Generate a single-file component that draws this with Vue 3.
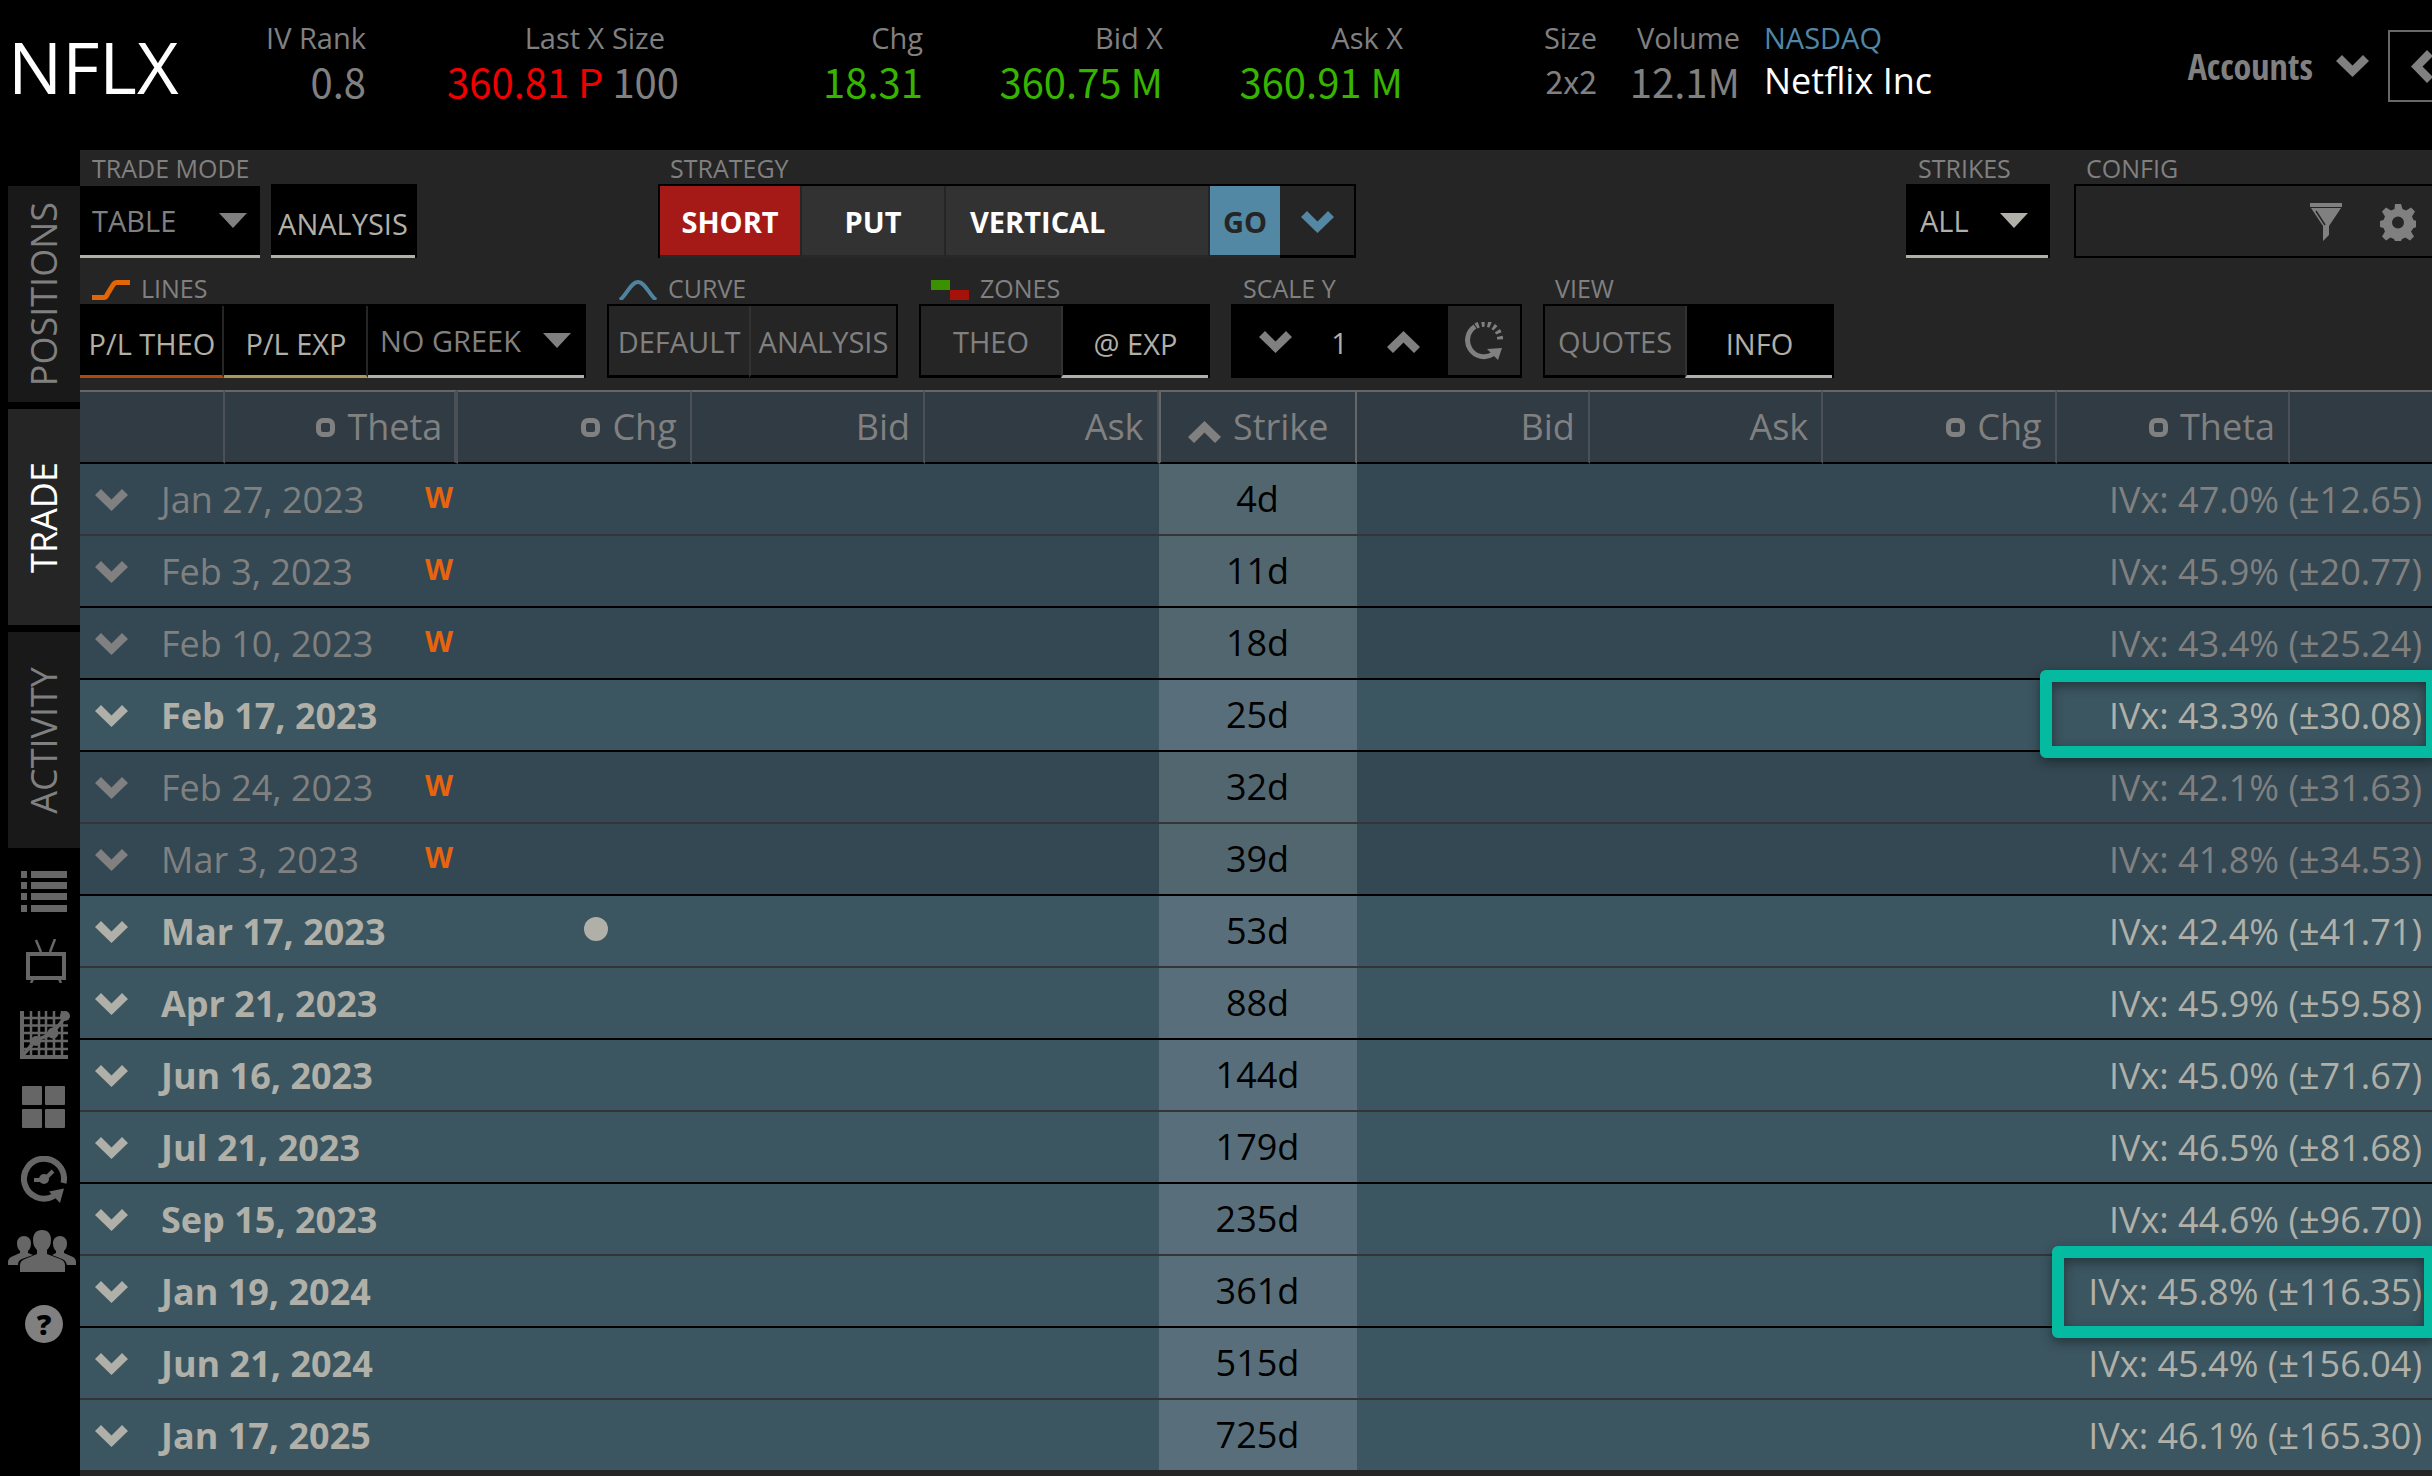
<script setup>
import { ref } from 'vue'

const tabs = ['POSITIONS', 'TRADE', 'ACTIVITY']
const activeTab = ref('TRADE')

const quotes = [
  { key: 'iv', label: 'IV Rank', value: '0.8' },
  { key: 'last', label: 'Last X Size', value: '360.81 P', tone: 'down', extra: '100' },
  { key: 'chg', label: 'Chg', value: '18.31', tone: 'up' },
  { key: 'bid', label: 'Bid X', value: '360.75 M', tone: 'up' },
  { key: 'ask', label: 'Ask X', value: '360.91 M', tone: 'up' },
  { key: 'size', label: 'Size', value: '2x2' },
  { key: 'volume', label: 'Volume', value: '12.1M' }
]

const rows = [
  { date: 'Jan 27, 2023', days: '4d', iv: '47.0%', move: '12.65', weekly: true, line: 'soft' },
  { date: 'Feb 3, 2023', days: '11d', iv: '45.9%', move: '20.77', weekly: true },
  { date: 'Feb 10, 2023', days: '18d', iv: '43.4%', move: '25.24', weekly: true },
  { date: 'Feb 17, 2023', days: '25d', iv: '43.3%', move: '30.08', mark: 'narrow' },
  { date: 'Feb 24, 2023', days: '32d', iv: '42.1%', move: '31.63', weekly: true, line: 'soft' },
  { date: 'Mar 3, 2023', days: '39d', iv: '41.8%', move: '34.53', weekly: true },
  { date: 'Mar 17, 2023', days: '53d', iv: '42.4%', move: '41.71', dot: true, line: 'soft' },
  { date: 'Apr 21, 2023', days: '88d', iv: '45.9%', move: '59.58' },
  { date: 'Jun 16, 2023', days: '144d', iv: '45.0%', move: '71.67', line: 'soft' },
  { date: 'Jul 21, 2023', days: '179d', iv: '46.5%', move: '81.68' },
  { date: 'Sep 15, 2023', days: '235d', iv: '44.6%', move: '96.70', line: 'soft' },
  { date: 'Jan 19, 2024', days: '361d', iv: '45.8%', move: '116.35', mark: 'wide' },
  { date: 'Jun 21, 2024', days: '515d', iv: '45.4%', move: '156.04', line: 'soft' },
  { date: 'Jan 17, 2025', days: '725d', iv: '46.1%', move: '165.30', line: 'last' }
]
</script>

<template>
  <div class="app">
    <header class="topbar">
      <h1 class="symbol">NFLX</h1>
      <div v-for="q in quotes" :key="q.key" class="quote" :class="q.key">
        <span class="q-label">{{ q.label }}</span>
        <span class="q-value"><span :class="q.tone">{{ q.value }}</span><template v-if="q.extra">{{ ' ' + q.extra }}</template></span>
      </div>
      <div class="company">
        <span class="exchange">NASDAQ</span>
        <span class="name">Netflix Inc</span>
      </div>
      <button class="accounts" type="button">
        Accounts
        <svg class="chev" viewBox="0 0 33 22"><path d="M6 0 0 6 16.5 22 33 6 27 0 16.5 10.5z" /></svg>
      </button>
      <button class="collapse" type="button" aria-label="Collapse">
        <svg width="22" height="33" viewBox="0 0 22 33"><path d="M22 6 16 0 0 16.5 16 33 22 27 11.5 16.5z" /></svg>
      </button>
    </header>

    <div class="body">
      <nav class="side">
        <button v-for="t in tabs" :key="t" type="button" class="tab" :class="{ on: t === activeTab }" @click="activeTab = t">
          <span>{{ t }}</span>
        </button>
        <div class="tools">
          <button type="button" aria-label="Watchlist">
            <svg width="46" height="41" viewBox="0 0 46 41"><path d="M0 0h6v7H0zM10 0h36v7H10zM0 11h6v7H0zM10 11h36v7H10zM0 22h6v7H0zM10 22h36v7H10zM0 34h6v7H0zM10 34h36v7H10z" /></svg>
          </button>
          <button type="button" aria-label="Live" class="tv">
            <svg width="40" height="44" viewBox="0 0 40 44"><path d="M0 13h40v28H0zM4 17v20h32V17z" fill-rule="evenodd" /><path d="M10 1l5 12M29 0l-5 13M7 40l-2 4M33 40l2 4" stroke="#666" stroke-width="2.500" fill="none" /></svg>
          </button>
          <button type="button" aria-label="Charts" class="chart">
            <svg width="50" height="48" viewBox="0 0 50 48"><path d="M2 0v48M0 46h48" stroke="#666" stroke-width="4" /><path d="M11 0v46M19 0v46M26 0v46M34 0v46M42 0v46M2 7h46M2 14.500h46M2 22h46M2 30h46M2 38h46" stroke="#666" stroke-width="2.500" /><path d="M3 44l13-15 16-6L46 5" stroke="#666" stroke-width="3.500" fill="none" /><circle cx="16" cy="30" r="5" /><circle cx="33" cy="22" r="5.500" /><circle cx="45" cy="5" r="5" /></svg>
          </button>
          <button type="button" aria-label="Grid">
            <svg width="44" height="42" viewBox="0 0 44 42"><rect width="20" height="19" rx="1" /><rect x="23" width="20" height="19" rx="1" /><rect y="23" width="20" height="19" rx="1" /><rect x="23" y="23" width="20" height="19" rx="1" /></svg>
          </button>
          <button type="button" aria-label="History">
            <svg width="46" height="47" viewBox="0 0 46 47"><path d="M42.500 27A20 20 0 1 0 33 40" stroke="#666" stroke-width="6" fill="none" /><path d="M28 35.500 43 32.500 39 47z" /><path d="M13 24h10l9-9" stroke="#666" stroke-width="4" fill="none" /><circle cx="23" cy="23" r="5" /></svg>
          </button>
          <button type="button" aria-label="Follow" class="people">
            <svg width="68" height="42" viewBox="0 0 68 42"><path d="M34 0c6 0 9 4 9 10 0 5-2 8-4 10v4l13 5c3 1 5 3 5 6v7H12v-7c0-3 2-5 5-6l12-5v-4c-2-2-4-5-4-10 0-6 3-10 9-10z" /><path d="M16 6c4 0 7 3 7 7s-1 6-3 8v2l5 2-11 4c-3 1-4 3-4 6H0v-3c0-2 1-4 3-5l9-4v-2c-2-2-3-4-3-8s3-7 7-7zM52 6c-4 0-7 3-7 7s1 6 3 8v2l-4 2 10 4c3 1 4 3 5 6h9v-3c0-2-1-4-3-5l-9-4v-2c2-2 3-4 3-8s-3-7-7-7z" /></svg>
          </button>
          <button type="button" aria-label="Help" class="help">?</button>
        </div>
      </nav>

      <main class="main">
        <section class="toolbar">
          <div class="bar">
            <div class="group mode">
              <label class="g-label" for="mode">TRADE MODE</label>
              <div class="split">
                <div class="pick"><select id="mode"><option>TABLE</option></select></div>
                <div class="cells single"><button type="button" class="cell on">ANALYSIS</button></div>
              </div>
            </div>
            <div class="group strategy">
              <span class="g-label">STRATEGY</span>
              <div class="cells">
                <button type="button" class="cell short">SHORT</button>
                <button type="button" class="cell put">PUT</button>
                <button type="button" class="cell vertical">VERTICAL</button>
                <button type="button" class="cell go">GO</button>
                <button type="button" class="cell more" aria-label="More">
                  <svg class="chev" viewBox="0 0 33 22"><path d="M6 0 0 6 16.5 22 33 6 27 0 16.5 10.5z" /></svg>
                </button>
              </div>
            </div>
            <div class="group strikes">
              <label class="g-label" for="strikes">STRIKES</label>
              <div class="cells"><div class="pick lit"><select id="strikes"><option>ALL</option></select></div></div>
            </div>
            <div class="group config">
              <span class="g-label">CONFIG</span>
              <div class="cells">
                <button type="button" aria-label="Filter">
                  <svg width="32" height="38" viewBox="0 0 32 38"><path d="M0 0h32v4H0zM1 5h30L19 23v9l-6 6V23z" /><path d="M6 8l9 14" stroke="#252525" stroke-width="1.500" /></svg>
                </button>
                <button type="button" aria-label="Settings">
                  <svg width="36" height="37" viewBox="-18 -18.500 36 37"><path fill-rule="evenodd" d="M-3-18.500h6l1.500 5 3.500 1.500 5-3 4 4-3 5 1.500 3.500 5 1.500v5l-5 1.500L13 9l3 5-4 4-4.500-3L4 16.500 3 18.500h-6l-1-2L-7.500 15-12 18l-4-4 3-5-1.500-3.500-5-1.500v-5l5-1.500L-13-6l-3-5 4-4 5 3 3.500-1.500zM0-6a6 6 0 1 0 0 12A6 6 0 1 0 0-6z" /></svg>
                </button>
              </div>
            </div>
          </div>

          <div class="bar second">
            <div class="group lines">
              <span class="g-label"><svg width="38" height="20" viewBox="0 0 38 20"><path d="M0 17.500h12Q14 17.500 15.500 14L21 5Q22.500 2.500 25 2.500h13" stroke="#e06608" stroke-width="5" fill="none" /></svg>LINES</span>
              <div class="cells">
                <button type="button" class="cell on theo">P/L THEO</button>
                <button type="button" class="cell on exp">P/L EXP</button>
                <div class="pick"><select aria-label="Greek"><option>NO GREEK</option></select></div>
              </div>
            </div>
            <div class="group half">
              <span class="g-label"><svg width="38" height="20" viewBox="0 0 38 20"><path d="M1 20C9 13 12 2 19 2s10 11 18 18" stroke="#4f83a0" stroke-width="4" fill="none" /></svg>CURVE</span>
              <div class="cells">
                <button type="button" class="cell">DEFAULT</button>
                <button type="button" class="cell">ANALYSIS</button>
              </div>
            </div>
            <div class="group half">
              <span class="g-label"><svg width="38" height="20" viewBox="0 0 38 20"><path d="M0 0h19v10H0z" fill="#3c9100" /><path d="M19 10h19v10H19z" fill="#a5120a" /></svg>ZONES</span>
              <div class="cells">
                <button type="button" class="cell">THEO</button>
                <button type="button" class="cell on">@ EXP</button>
              </div>
            </div>
            <div class="group half scale">
              <span class="g-label">SCALE Y</span>
              <div class="cells">
                <div class="stepper">
                  <button type="button" aria-label="Decrease"><svg class="chev" viewBox="0 0 33 22"><path d="M6 0 0 6 16.5 22 33 6 27 0 16.5 10.5z" /></svg></button>
                  <output>1</output>
                  <button type="button" aria-label="Increase"><svg class="chev" viewBox="0 0 33 22"><path d="M6 22 0 16 16.500 0 33 16 27 22 16.500 11.500z" /></svg></button>
                </div>
                <button type="button" class="cell reset" aria-label="Reset scale">
                  <svg width="38" height="38" viewBox="0 0 38 38"><path d="M10 4.500A15.500 15.500 0 1 0 28 32" stroke="#808080" stroke-width="5" fill="none" /><path d="M22 27 37 26 33 38z" fill="#808080" /><path d="M11 4A16 16 0 0 1 35 20" stroke="#808080" stroke-width="6" stroke-dasharray="3 3" fill="none" /></svg>
                </button>
              </div>
            </div>
            <div class="group half">
              <span class="g-label">VIEW</span>
              <div class="cells">
                <button type="button" class="cell">QUOTES</button>
                <button type="button" class="cell on">INFO</button>
              </div>
            </div>
          </div>
        </section>

        <table class="chain">
          <colgroup>
            <col class="c-first" /><col /><col /><col /><col />
            <col class="c-strike" />
            <col /><col /><col /><col /><col class="c-last" />
          </colgroup>
          <thead>
            <tr>
              <th></th>
              <th class="thick"><i class="ring"></i>Theta</th>
              <th><i class="ring"></i>Chg</th>
              <th>Bid</th>
              <th>Ask</th>
              <th class="strike"><svg class="chev" viewBox="0 0 33 22"><path d="M6 22 0 16 16.500 0 33 16 27 22 16.500 11.500z" /></svg>Strike</th>
              <th>Bid</th>
              <th>Ask</th>
              <th><i class="ring"></i>Chg</th>
              <th><i class="ring"></i>Theta</th>
              <th class="end"></th>
            </tr>
          </thead>
          <tbody>
            <tr v-for="r in rows" :key="r.date" :class="[r.line, { weekly: r.weekly }]">
              <td colspan="5">
                <div class="expiry">
                  <button type="button" :aria-label="'Expand ' + r.date"><svg class="chev" viewBox="0 0 33 22"><path d="M6 0 0 6 16.5 22 33 6 27 0 16.5 10.5z" /></svg></button>
                  <span class="date">{{ r.date }}</span>
                  <span class="w">{{ r.weekly ? 'W' : '' }}</span>
                  <span v-if="r.dot" class="dot"></span>
                </div>
              </td>
              <td class="days">{{ r.days }}</td>
              <td colspan="5" class="ivx">
                IVx: {{ r.iv }} (±{{ r.move }})
                <span v-if="r.mark" class="mark" :class="r.mark"></span>
              </td>
            </tr>
          </tbody>
        </table>
      </main>
    </div>
  </div>
</template>

<style>
body {
  background: #000;
}
</style>

<style scoped>
* {
  box-sizing: border-box;
}
.app {
  min-height: 100vh;
  overflow: hidden;
  display: flex;
  flex-direction: column;
  background: #000;
  color: #808080;
  font-family: "Open Sans", "Noto Sans", sans-serif;
  font-size: 29px;
}
button,
select {
  margin: 0;
  padding: 0;
  border: 0;
  border-radius: 0;
  background: none;
  color: inherit;
  font: inherit;
}
svg {
  display: block;
  fill: currentColor;
}
.chev {
  width: 33px;
  height: 22px;
  flex: none;
}

/* Quote header */
.topbar {
  display: flex;
  align-items: flex-start;
  height: 150px;
  padding-top: 18px;
  white-space: nowrap;
}
.symbol {
  width: 200px;
  margin: 0;
  padding-left: 8px;
  color: #fff;
  font-size: 72px;
  font-weight: 400;
  line-height: 96px;
}
.quote,
.company {
  display: flex;
  flex-direction: column;
  text-align: right;
}
.q-label,
.exchange {
  line-height: 40px;
}
.q-value {
  font-family: "Noto Sans CJK SC", sans-serif;
  font-size: 40px;
  line-height: 46px;
}
.iv {
  width: 166px;
}
.last {
  width: 313px;
}
.last .q-label {
  padding-right: 14px;
}
.chg {
  width: 244px;
}
.bid {
  width: 240px;
}
.ask {
  width: 240px;
}
.size {
  width: 194px;
}
.size .q-value {
  font-size: 32px;
  line-height: 44px;
}
.volume {
  width: 143px;
}
.up {
  color: #37b400;
}
.down {
  color: #f00000;
}
.company {
  margin-left: 24px;
  text-align: left;
}
.exchange {
  color: #4f87a5;
}
.name {
  color: #fff;
  font-size: 36px;
  line-height: 46px;
}
.accounts {
  display: flex;
  align-items: center;
  gap: 23px;
  height: 96px;
  margin-left: auto;
  font-family: "Open Sans Condensed", "Roboto Condensed", "Roboto", sans-serif;
  font-size: 36px;
  font-weight: 700;
}
.collapse {
  display: flex;
  align-items: center;
  width: 44px;
  height: 72px;
  margin: 12px 0 0 19px;
  padding-left: 21px;
  overflow: hidden;
  border: 2px solid #686868;
  border-right: 0;
}
.collapse svg {
  flex: none;
}

.body {
  display: flex;
  flex: 1;
}

/* Left rail */
.side {
  width: 80px;
  flex: none;
  display: flex;
  flex-direction: column;
  gap: 7px;
  padding-top: 36px;
}
.tab {
  display: flex;
  align-items: center;
  justify-content: center;
  width: 72px;
  height: 216px;
  margin-left: 8px;
  background: #191919;
  font-size: 36px;
}
.tab span {
  writing-mode: vertical-rl;
  rotate: 180deg;
  line-height: 72px;
}
.tab.on {
  background: #252525;
  color: #fff;
}
.tools {
  display: flex;
  flex-direction: column;
  gap: 24px;
  padding-top: 12px;
  color: #666;
}
.tools button {
  display: flex;
  align-items: center;
  justify-content: center;
  height: 48px;
  padding-left: 7px;
}
.tools .chart {
  padding-left: 10px;
}
.tools .tv {
  padding: 0 0 4px 12px;
}
.tools .people {
  padding-left: 4px;
}
.tools .help {
  width: 38px;
  height: 38px;
  margin: 6px 0 0 25px;
  padding: 0;
  border-radius: 50%;
  background: #808080;
  color: #000;
  font-weight: 800;
  line-height: 38px;
}

/* Toolbar */
.main {
  flex: 1;
  min-width: 0;
  background: #252525;
}
.toolbar {
  padding: 2px 0 12px;
}
.bar {
  display: flex;
}
.second {
  gap: 21px;
  margin-top: 14px;
}
.group {
  flex: none;
}
.g-label {
  display: flex;
  align-items: center;
  gap: 11px;
  padding-left: 12px;
  font-size: 25px;
  line-height: 32px;
}
.g-label svg {
  margin-top: 4px;
}
.cells {
  display: flex;
  height: 74px;
  border: solid #000;
  border-width: 2px 2px 0;
  background: #000;
}
.cell {
  display: flex;
  align-items: center;
  justify-content: center;
  flex: 1;
  padding-top: 1px;
  background: #252525;
  border-bottom: 3px solid #000;
  white-space: nowrap;
}
.cell + .cell {
  border-left: 2px solid #323232;
}
.cell.on {
  padding-top: 6px;
  background: #000;
  border-bottom-color: #b0b0a8;
  color: #b0b0a8;
}
.pick {
  position: relative;
  display: flex;
  background: #000;
  border-bottom: 3px solid #b0b0a8;
}
.pick select {
  width: 100%;
  padding-left: 12px;
  appearance: none;
  outline: 0;
}
.pick::after {
  content: "";
  position: absolute;
  right: 13px;
  top: 50%;
  margin-top: -8px;
  border: 14px solid transparent;
  border-top: 15px solid currentColor;
  border-bottom: 0;
  pointer-events: none;
}
.split {
  display: flex;
  gap: 11px;
}
.split .pick {
  width: 180px;
  height: 72px;
  margin-top: 2px;
}
.single {
  width: 146px;
}
.single .cell {
  margin-left: -2px;
}
.strategy {
  width: 698px;
  margin-left: 241px;
}
.strategy .cell {
  padding-top: 2px;
  background: #323232;
  border-bottom-color: #282828;
  color: #fff;
  font-weight: 700;
}
.strategy .cell + .cell {
  border-left-color: #252525;
}
.strategy .short {
  flex: 0 0 140px;
  background: #a51a16;
}
.strategy .put {
  flex: 0 0 144px;
}
.strategy .vertical {
  justify-content: flex-start;
  padding-left: 24px;
}
.strategy .go {
  flex: 0 0 72px;
  background: #5288a3;
  color: #252525;
}
.strategy .more {
  flex: 0 0 74px;
  background: #252525;
  border-left: 0;
  border-bottom-color: #000;
  color: #5288a3;
}
.strikes {
  width: 144px;
  margin: 0 24px 0 auto;
}
.strikes .cells {
  border-left: 0;
}
.lit {
  width: 100%;
  color: #b0b0a8;
}
.lit select {
  padding-left: 14px;
}
.lit::after {
  right: 20px;
}
.config {
  width: 358px;
}
.config .cells {
  align-items: center;
  justify-content: flex-end;
  gap: 38px;
  padding: 2px 16px 0 0;
  background: #252525;
  border-width: 2px 0 2px 2px;
}
.lines {
  width: 506px;
}
.lines .cells {
  border-left: 0;
}
.lines .cell {
  flex: 0 0 144px;
  padding-left: 2px;
  border-right: 2px solid #252525;
  border-left: 0;
}
.lines .pick {
  flex: 1;
}
.cell.theo {
  border-bottom-color: #b04a08;
}
.cell.exp {
  border-bottom-color: #a8985c;
}
.half {
  width: 291px;
}
.half .cell:first-child {
  flex: 0 0 140px;
}
.stepper {
  display: flex;
  flex: 0 0 215px;
  align-items: center;
  justify-content: space-between;
  padding: 0 28px 0 26px;
  color: #808080;
}
.stepper output {
  color: #b0b0a8;
}

/* Option chain */
.chain {
  width: 100%;
  table-layout: fixed;
  border-spacing: 0;
  font-size: 36px;
  line-height: 48px;
  white-space: nowrap;
}
.c-first {
  width: 145px;
}
.c-strike {
  width: 198px;
}
.c-last {
  width: 142px;
}
th {
  height: 74px;
  padding: 0 13px 0 0;
  background: #303b43;
  border: solid #4a5056;
  border-width: 2px 2px 2px 0;
  border-top-color: #666;
  border-bottom-color: #000;
  font-weight: 400;
  text-align: right;
}
th.thick {
  padding-right: 12px;
  border-right-width: 4px;
}
th.end {
  border-right: 0;
}
th.strike {
  padding-right: 26px;
  border-left: 2px solid #666;
  border-right-color: #666;
}
th .chev {
  display: inline-block;
  margin-right: 12px;
  vertical-align: -3px;
}
.ring {
  display: inline-block;
  width: 19px;
  height: 19px;
  margin-right: 12px;
  border: 5px solid #808080;
  border-radius: 7px;
  vertical-align: 3px;
}
td {
  height: 72px;
  padding: 2px 0 0;
  background: #3b5661;
  border-bottom: 2px solid #000;
  color: #b0b0a8;
}
.weekly td {
  background: #334852;
  color: #808080;
}
.soft td {
  border-bottom-color: #353535;
}
tr.last td {
  height: 70px;
  border-bottom: 0;
}
.expiry {
  display: grid;
  grid-template-columns: 66px 264px 159px 1fr;
  align-items: center;
  padding-left: 15px;
}
.date {
  font-weight: 700;
}
.weekly .date {
  font-weight: 400;
}
.w {
  padding-bottom: 6px;
  color: #e8640c;
  font-size: 29px;
  font-weight: 700;
  line-height: 40px;
}
.dot {
  width: 24px;
  height: 24px;
  margin-bottom: 6px;
  border-radius: 50%;
  background: #b0b0a8;
}
td.days {
  padding-top: 0;
  background: #586f7b;
  color: #000;
  text-align: center;
}
.weekly td.days {
  background: #52666f;
}
.ivx {
  position: relative;
  padding-right: 10px;
  text-align: right;
}
.mark {
  position: absolute;
  top: -10px;
  right: -6px;
  z-index: 1;
  width: 398px;
  height: 88px;
  border: 12px solid #04bba1;
  border-radius: 6px;
  box-shadow: 0 4px 12px rgba(0, 0, 0, 0.4), inset 0 4px 12px rgba(0, 0, 0, 0.4);
}
.mark.wide {
  right: -4px;
  width: 384px;
  height: 92px;
}
</style>
